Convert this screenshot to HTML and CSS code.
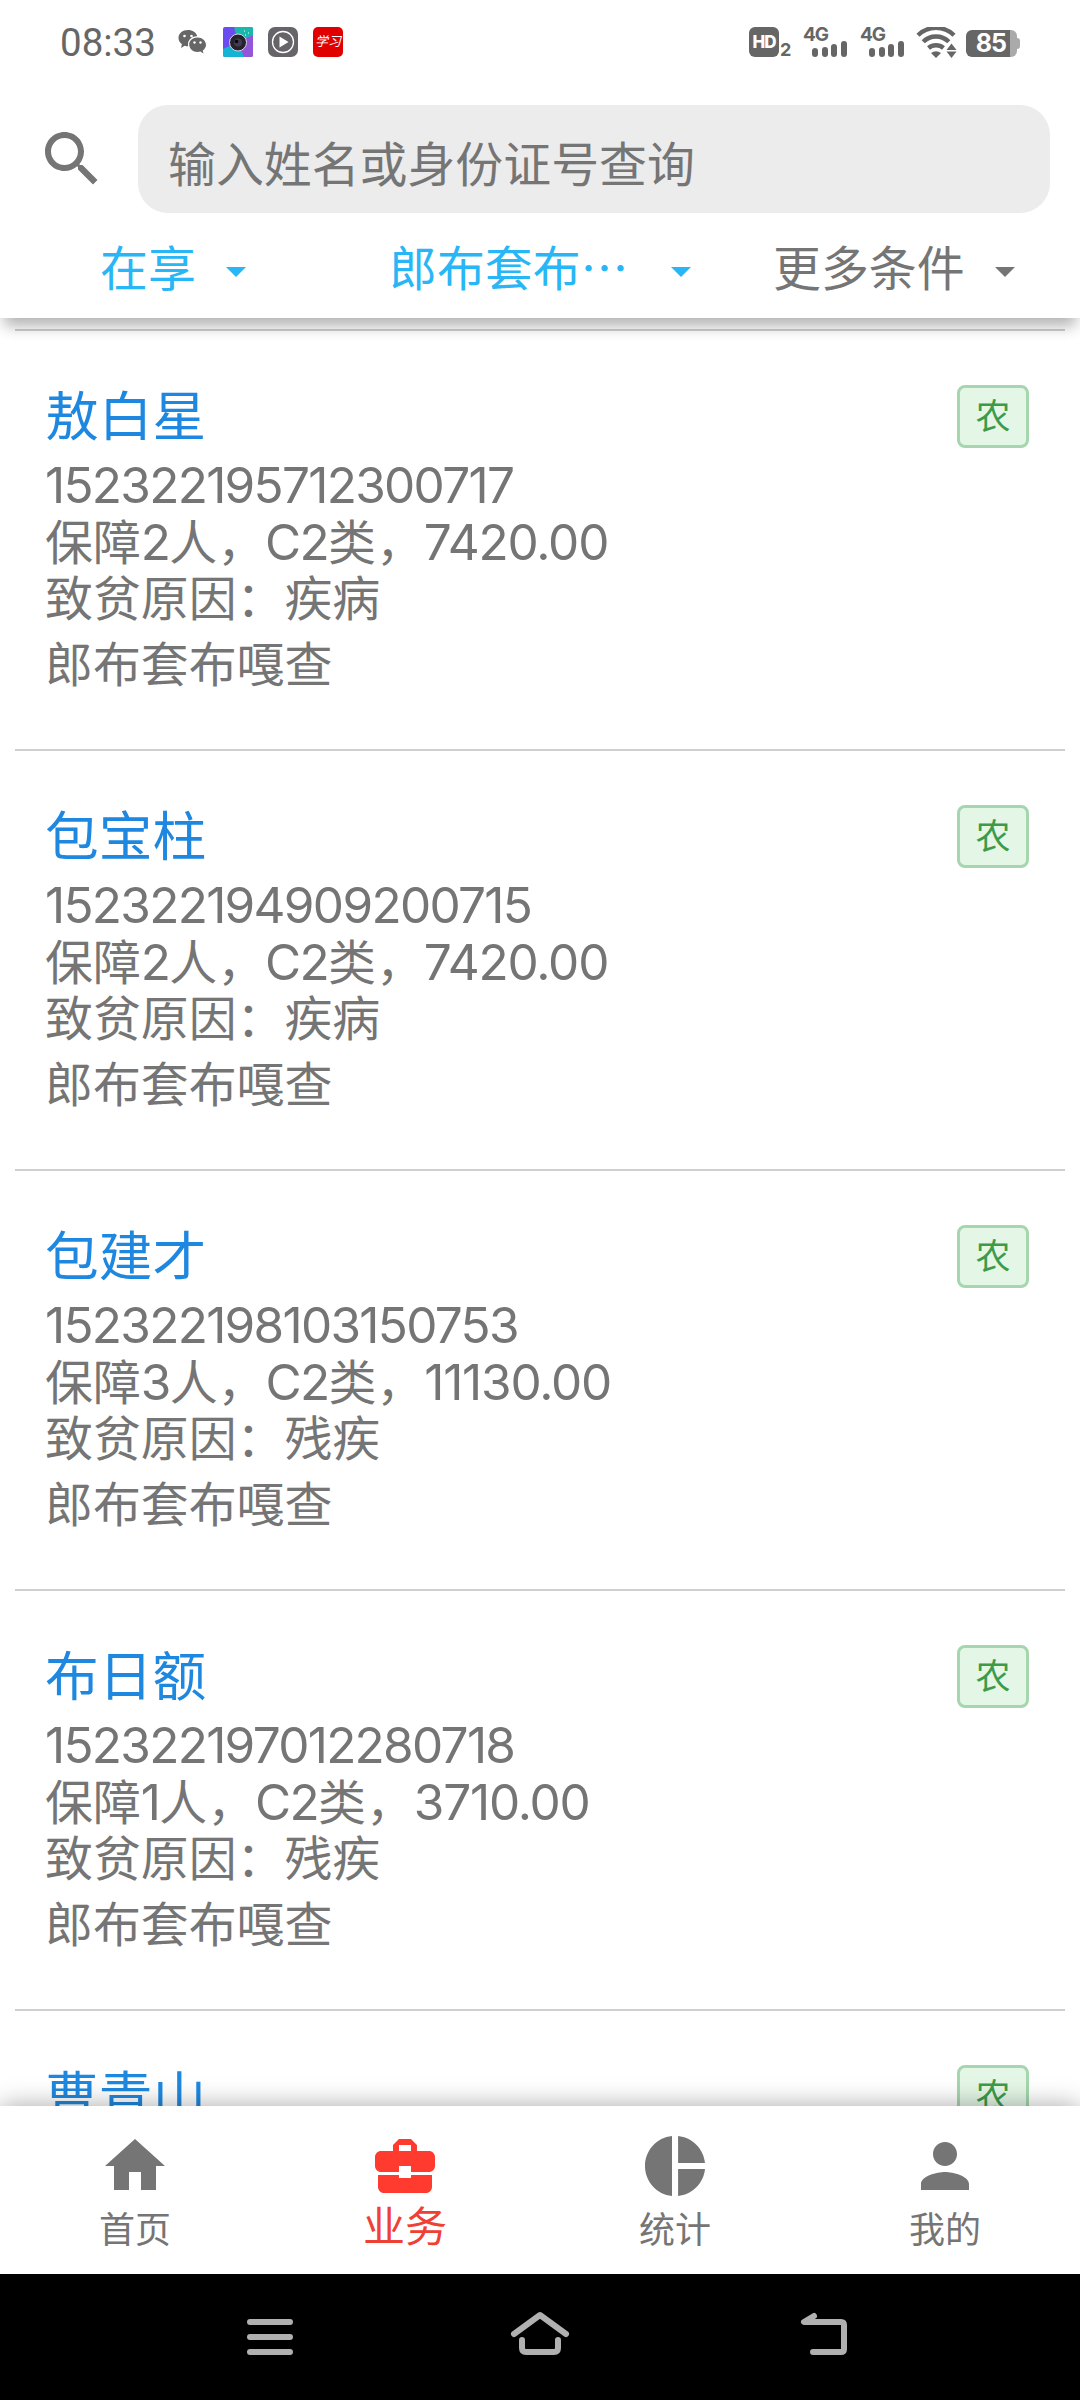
FILE: index.html
```html
<!DOCTYPE html>
<html lang="zh-CN">
<head>
<meta charset="utf-8">
<title>业务</title>
<link rel="stylesheet" href="styles.css">
</head>
<body>
<div class="screen">
  <header class="header">
    <div class="status">
      <span class="clock">08:33</span>
      <div class="notices">
        <svg width="30" height="30" viewBox="0 0 30 30"><path fill="#666" d="M10 3C4.500 3 .5 6.500 .5 11c0 2.500 1.300 4.700 3.400 6.100L3.100 21l3.500-2.300c1.200.4 2.400.5 3.600.5-1.200-5.700 3-10.200 9-10C18.300 5.500 14.500 3 10 3z"/><path fill="#666" d="M19.500 10.500c-4.700 0-8.300 3-8.300 7s3.600 7.500 8.300 7.500c1 0 2-.1 2.900-.4l3.100 1.900-.8-3c2-1.300 3.300-3.300 3.300-5.500 0-4-3.800-7.500-8.500-7.500z"/><g fill="#fff"><circle cx="6.500" cy="9" r="1.300"/><circle cx="13.500" cy="9" r="1.300"/><circle cx="16.500" cy="15.500" r="1.200"/><circle cx="22.500" cy="15.500" r="1.200"/></g></svg>
        <svg width="30" height="30" viewBox="0 0 30 30"><rect width="30" height="30" rx="2" fill="#6a4cf0"/><path d="M11 0h17q2 0 2 2v10L15 15z" fill="#18b8ac"/><path d="M30 8v20q0 2-2 2h-8l-5-15z" fill="#9456d8"/><path d="M0 22l15-7 6 15H2q-2 0-2-2z" fill="#16b4d4"/><circle cx="15" cy="15.500" r="8.500" fill="#25232d" stroke="#d8d4e8"/><circle cx="15" cy="15.500" r="4" fill="#433b50"/><circle cx="13.500" cy="14.500" r="1.800" fill="#08060e"/><path d="M21 4h1M25 6h1M22 8h1" stroke="#fff"/></svg>
        <svg width="30" height="30" viewBox="0 0 30 30"><rect width="30" height="30" rx="7" fill="#666469"/><circle cx="15" cy="15" r="10.500" fill="none" stroke="#fff" stroke-width="1.300"/><path d="M11.500 9.500v11l9-5.500z" fill="#fff"/></svg>
        <span class="study">学习</span>
      </div>
      <div class="system">
        <span class="hd">HD</span><span class="hd-sub">2</span>
        <span class="cell"><span class="cell-type">4G</span><i class="bar b1"></i><i class="bar b2"></i><i class="bar b3"></i><i class="bar b4"></i></span>
        <span class="cell"><span class="cell-type">4G</span><i class="bar b1"></i><i class="bar b2"></i><i class="bar b3"></i><i class="bar b4"></i></span>
        <svg class="wifi" width="42" height="32" viewBox="0 0 42 32"><g fill="none" stroke="#666" stroke-width="4.400"><path d="M2 8.300a25.500 25.500 0 0 1 36 0"/><path d="M7.200 14.800a18 18 0 0 1 25.600 0"/><path d="M12.500 21a11.500 11.500 0 0 1 15 0"/></g><path fill="#666" d="M20 31l-5-5q5-3.600 10 0z"/><path fill="#fff" d="M29 31V22l6.500-9 8 9v9z"/><path fill="#666" d="M35.500 16.500l5 6.500h-10zM35.500 31l5-6.500h-10z"/></svg>
        <span class="battery">85</span><i class="tip"></i>
      </div>
    </div>
    <div class="search">
      <svg class="search-icon" width="72" height="72" viewBox="0 0 24 24"><path fill="#757575" d="M15.500 14h-.79l-.28-.27C15.410 12.590 16 11.110 16 9.500 16 5.910 13.090 3 9.500 3S3 5.910 3 9.500 5.910 16 9.500 16c1.610 0 3.090-.59 4.230-1.570l.27.28v.79l5 4.990L20.490 19l-4.990-5zm-6 0C7.010 14 5 11.990 5 9.500S7.010 5 9.500 5 14 7.010 14 9.500 11.990 14 9.500 14z"/></svg>
      <div class="field">输入姓名或身份证号查询</div>
    </div>
    <div class="filters">
      <div class="filter on f1">在享<i class="caret"></i></div>
      <div class="filter on f2">郎布套布…<i class="caret"></i></div>
      <div class="filter f3">更多条件<i class="caret"></i></div>
    </div>
  </header>

  <main class="list">
    <article class="card">
      <div class="top"><h2>敖白星</h2><span class="tag">农</span></div>
      <p><b>152322195712300717</b></p>
      <p>保障<b>2</b>人，<b>C2</b>类，<b class="sum">7420.00</b></p>
      <p>致贫原因：疾病</p>
      <p class="place">郎布套布嘎查</p>
    </article>
    <article class="card">
      <div class="top"><h2>包宝柱</h2><span class="tag">农</span></div>
      <p><b>152322194909200715</b></p>
      <p>保障<b>2</b>人，<b>C2</b>类，<b class="sum">7420.00</b></p>
      <p>致贫原因：疾病</p>
      <p class="place">郎布套布嘎查</p>
    </article>
    <article class="card">
      <div class="top"><h2>包建才</h2><span class="tag">农</span></div>
      <p><b>152322198103150753</b></p>
      <p>保障<b>3</b>人，<b>C2</b>类，<b class="sum">11130.00</b></p>
      <p>致贫原因：残疾</p>
      <p class="place">郎布套布嘎查</p>
    </article>
    <article class="card">
      <div class="top"><h2>布日额</h2><span class="tag">农</span></div>
      <p><b>152322197012280718</b></p>
      <p>保障<b>1</b>人，<b>C2</b>类，<b class="sum">3710.00</b></p>
      <p>致贫原因：残疾</p>
      <p class="place">郎布套布嘎查</p>
    </article>
    <article class="card">
      <div class="top"><h2>曹青山</h2><span class="tag">农</span></div>
    </article>
  </main>

  <nav class="tabs">
    <div class="tab"><svg width="72" height="72" viewBox="0 0 24 24"><path d="M10 20v-6h4v6h5v-8h3L12 3 2 12h3v8z"/></svg><span>首页</span></div>
    <div class="tab active"><svg width="72" height="72" viewBox="0 0 24 24"><path d="M10 16v-1H3.010L3 19c0 1.110.89 2 2 2h14c1.110 0 2-.89 2-2v-4h-7v1h-4zm10-9h-4.010V5l-2-2h-4l-2 2v2H4c-1.100 0-2 .9-2 2v3c0 1.110.89 2 2 2h6v-2h4v2h6c1.100 0 2-.9 2-2V9c0-1.100-.9-2-2-2zm-6 0h-4V5h4v2z"/></svg><span>业务</span></div>
    <div class="tab"><svg width="72" height="72" viewBox="0 0 24 24"><path d="M11 2v20c-5.070-.5-9-4.790-9-10s3.930-9.500 9-10zm2.030 0v8.990H22c-.47-4.740-4.240-8.520-8.970-8.990zm0 11.010V22c4.740-.47 8.500-4.250 8.970-8.990h-8.970z"/></svg><span>统计</span></div>
    <div class="tab"><svg width="72" height="72" viewBox="0 0 24 24"><path d="M12 12c2.210 0 4-1.790 4-4s-1.790-4-4-4-4 1.790-4 4 1.790 4 4 4zm0 2c-2.670 0-8 1.340-8 4v2h16v-2c0-2.660-5.330-4-8-4z"/></svg><span>我的</span></div>
  </nav>

  <footer class="keys">
    <svg width="60" height="60" viewBox="0 0 60 60"><path d="M10 15h40M10 30h40M10 45h40"/></svg>
    <svg width="60" height="60" viewBox="0 0 60 60"><path d="M4 27L30 8l26 19M12 33v8q0 4 4 4h28q4 0 4-4v-8"/></svg>
    <svg width="60" height="60" viewBox="0 0 60 60"><path d="M19 9L9 15h37q3 0 3 3v24q0 3-3 3H18"/></svg>
  </footer>
</div>
</body>
</html>
```
FILE: styles.css
```css
* { box-sizing: border-box; }
body { margin: 0; }
h2, p { margin: 0; font-weight: 400; }
svg { display: block; flex: none; }

.screen {
  width: 1080px;
  height: 2400px;
  overflow: hidden;
  display: flex;
  flex-direction: column;
  background: #fff;
  color: #757575;
  font: 47.900px/57px "Noto Sans CJK SC", sans-serif;
}

/* header */
.header {
  position: relative;
  z-index: 1;
  height: 318px;
  flex: none;
  background: #fff;
  box-shadow: 0 12px 14px -4px rgba(0, 0, 0, .3);
}
.status {
  height: 105px;
  padding: 27px 60px 0 60px;
  display: flex;
  align-items: flex-start;
  color: #666;
}
.clock { width: 118px; font: 38.500px/32px Roboto, sans-serif; }
.notices { display: flex; gap: 15px; }
.study {
  width: 30px;
  height: 30px;
  border-radius: 5px;
  background: #e00000;
  color: #fff;
  font: italic 13px/28px "Noto Sans CJK SC", sans-serif;
  text-align: center;
}
.system { margin-left: auto; display: flex; height: 30px; }
.hd {
  width: 30px;
  height: 30px;
  border-radius: 6px;
  background: #666;
  color: #fff;
  font: 800 17px/30px Inter, sans-serif;
  letter-spacing: -1px;
  text-align: center;
}
.hd-sub { width: 24px; padding-left: 1px; font: 700 18px/45px Inter, sans-serif; }
.cell { position: relative; width: 57px; display: flex; align-items: flex-end; gap: 3.500px; padding-left: 9px; }
.cell-type { position: absolute; left: 0; top: 0; font: 700 19px/15px Inter, sans-serif; letter-spacing: -1px; }
.bar { width: 6px; border-radius: 3px; background: #666; }
.b1 { height: 9px; }
.b2 { height: 10px; }
.b3 { height: 13px; }
.b4 { height: 16px; }
.wifi { margin-left: -1px; }
.battery {
  width: 44px;
  height: 27px;
  margin: 3px 0 0 8px;
  border-radius: 6px 0 0 6px;
  background: #666;
  color: #fff;
  font: 700 25px/27px Inter, sans-serif;
  text-align: right;
  letter-spacing: -1px;
  padding-right: 4px;
}
.tip {
  position: relative;
  width: 7px;
  height: 27px;
  margin: 3px 3px 0 0;
  border-radius: 0 6px 6px 0;
  background: #aaa;
}
.tip::after {
  content: "";
  position: absolute;
  left: 6px;
  top: 8px;
  width: 4px;
  height: 11px;
  border-radius: 0 3px 3px 0;
  background: #aaa;
}

.search { display: flex; align-items: center; height: 108px; padding: 0 30px 0 36px; }
.search-icon { margin-right: 30px; }
.field {
  flex: 1;
  height: 108px;
  padding-left: 30px;
  border-radius: 30px;
  background: #ececec;
  line-height: 112px;
}
.filters { display: flex; height: 105px; line-height: 102px; }
.filter { display: flex; height: 103px; align-items: center; }
.on { color: #29b6f6; }
.caret {
  margin: 15px 0 0 30px;
  border: 10px solid transparent;
  border-top-color: currentColor;
  border-bottom: 0;
}
.f1 { width: 289px; margin-left: 100px; }
.f2 { width: 384px; }
.f2 .caret { margin-left: 43px; }

/* list */
.list { flex: 1; overflow: hidden; padding: 11px 15px 0; }
.card { height: 420px; padding: 54px 36px 0 30px; border-top: 2px solid #cfcfcf; }
.top { display: flex; justify-content: space-between; height: 68px; margin-bottom: 1px; }
h2 { color: #1e88e0; font-size: 53.700px; line-height: 55px; }
.tag {
  width: 72px;
  height: 63px;
  border: 3px solid #a5d6ad;
  border-radius: 8px;
  background: #e4f6e6;
  color: #3c9b48;
  font-size: 35px;
  line-height: 51px;
  text-align: center;
}
.card p { height: 56.600px; }
.card b { font: 400 49.500px/1 Inter, sans-serif; line-height: 0; letter-spacing: -1.700px; }
.card .sum { letter-spacing: -1.200px; }
.card .place { margin-top: 9px; }

/* tab bar */
.tabs {
  position: relative;
  height: 168px;
  flex: none;
  display: flex;
  background: #fff;
  box-shadow: 0 0 24px rgba(0, 0, 0, .35);
}
.tab { flex: 1; padding-top: 24px; display: flex; flex-direction: column; align-items: center; font-size: 36px; }
.tab svg { fill: #757575; }
.tab span { line-height: 50px; }
.active { color: #ef4036; font-size: 42px; }
.active svg { fill: #ff3b30; }
.active span { line-height: 43px; }

/* system keys */
.keys {
  position: relative;
  height: 126px;
  flex: none;
  display: flex;
  gap: 210px;
  padding: 33px 0 0 240px;
  background: #000;
}
.keys svg { fill: none; stroke: #b0b0b0; stroke-width: 6; stroke-linecap: round; stroke-linejoin: round; }
.keys svg:last-child { margin-left: 15px; }
```
